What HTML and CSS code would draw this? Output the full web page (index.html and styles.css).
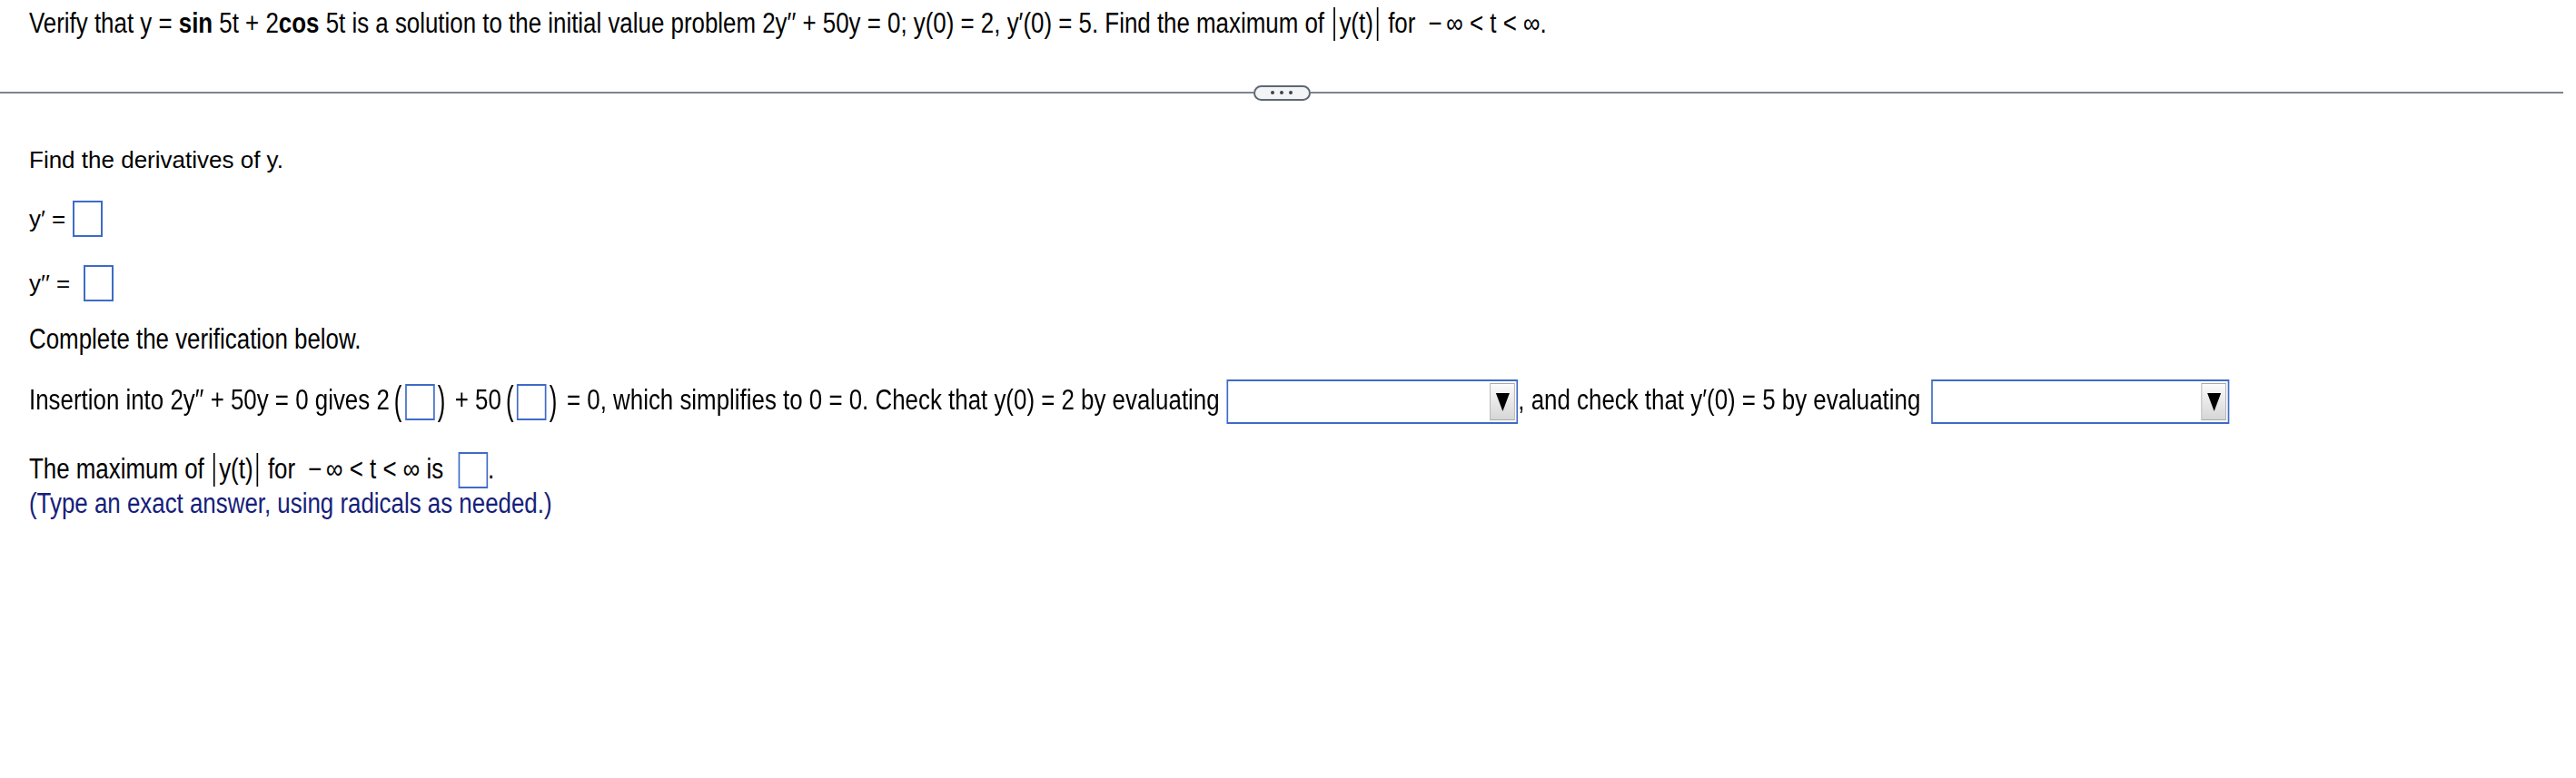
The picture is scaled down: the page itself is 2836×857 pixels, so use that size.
FILE: index.html
```html
<!DOCTYPE html>
<html>
<head>
<meta charset="utf-8">
<link rel="stylesheet" href="styles.css">
</head>
<body>
<div class="prompt cond">Verify that y = <b>sin</b> 5t + 2<b>cos</b> 5t is a solution to the initial value problem 2y′′ + 50y = 0; y(0) = 2, y′(0) = 5. Find the maximum of <span class="abs">y(t)</span> for <span class="neg">−</span>∞ &lt; t &lt; ∞.</div>
<div class="divider"><div class="rule"></div><div class="pill"><i></i><i></i><i></i></div><div class="rule"></div></div>
<div class="content">
<p class="row find arial">Find the derivatives of y.</p>
<p class="row d1 arial">y′ = <span class="box"></span></p>
<p class="row d2 arial">y′′ = <span class="box"></span></p>
<p class="row complete cond">Complete the verification below.</p>
<p class="row insert cond">Insertion into 2y′′ + 50y = 0 gives 2<span class="paren open">(</span><span class="box"></span><span class="paren">)</span> + 50<span class="paren open">(</span><span class="box"></span><span class="paren">)</span> = 0, which simplifies to 0 = 0. Check that y(0) = 2 by evaluating <span class="dropdown dd1"><span class="arrow"></span></span>, and check that y′(0) = 5 by evaluating <span class="dropdown dd2"><span class="arrow"></span></span></p>
<p class="row maxline cond">The maximum of <span class="abs">y(t)</span> for <span class="neg">−</span>∞ &lt; t &lt; ∞ is <span class="box"></span>.</p>
<p class="row hint cond">(Type an exact answer, using radicals as needed.)</p>
</div>
</body>
</html>
```
FILE: styles.css
```css
html, body {
  margin: 0;
  padding: 0;
  background: #ffffff;
  color: #000000;
}
body {
  font-family: "Liberation Sans", Arial, sans-serif;
}
/* condensed face: Arial-like glyphs narrowed horizontally */
.cond {
  font-family: "Liberation Sans", Arial, sans-serif;
  font-size: 31px;
  transform: scaleX(0.835);
  transform-origin: 0 0;
}
.arial {
  font-family: "Liberation Sans", Arial, sans-serif;
  font-size: 26px;
}
.prompt {
  margin-left: 32px;
  padding-top: 6px;
  height: 40px;
  line-height: 40px;
  white-space: nowrap;
}
.divider {
  display: flex;
  align-items: center;
  height: 20px;
  margin-top: 46px;
  margin-right: 14px;
}
.rule {
  flex: 1;
  height: 2px;
  background: #7b8491;
}
.pill {
  display: flex;
  align-items: center;
  justify-content: center;
  gap: 6px;
  width: 63px;
  height: 17px;
  box-sizing: border-box;
  border: 2px solid #5e6875;
  border-radius: 9px;
  background: #f3f4f6;
}
.pill i {
  width: 4px;
  height: 4px;
  border-radius: 50%;
  background: #3d444c;
}
.content {
  padding-top: 44px;
}
.row {
  margin: 0 0 0 32px;
  height: 40px;
  line-height: 40px;
  white-space: nowrap;
}
.d1 { margin-top: 25px; }
.d2 { margin-top: 31px; }
.d2 .box { margin-left: 8px; }
.complete { margin-top: 22px; }
.insert { margin-top: 22px; height: 50px; line-height: 50px; }
.maxline { margin-top: 31px; }
.maxline .box { margin-left: 11px; }
.hint { margin-top: -2px; color: #15207a; }
.box {
  display: inline-block;
  box-sizing: border-box;
  width: 33px;
  height: 40px;
  border: 2px solid #3f6bc6;
  vertical-align: -11px;
}
.cond .box {
  width: 39px;
  border-left-width: 2.4px;
  border-right-width: 2.4px;
}
.insert .box { vertical-align: -12px; }
.paren {
  display: inline-block;
  transform: scaleY(1.45);
  margin: 0 4px;
}
.paren.open { margin-left: 6px; }
.neg {
  margin: 0 6px 0 8px;
}
.abs {
  display: inline-block;
  line-height: 1;
  padding: 2px 5px 4px;
  margin: 0 4px;
  border-left: 2.4px solid #000;
  border-right: 2.4px solid #000;
}
.dropdown {
  display: inline-flex;
  justify-content: flex-end;
  align-items: center;
  box-sizing: border-box;
  height: 49px;
  padding-right: 2px;
  border: 2px solid #3f6bc6;
  border-left-width: 2.4px;
  border-right-width: 2.4px;
  background: #ffffff;
  vertical-align: middle;
}
.dd1 { width: 384px; margin-left: 1px; }
.dd2 { width: 393px; margin-left: 6px; }
.arrow {
  display: flex;
  align-items: center;
  justify-content: center;
  box-sizing: border-box;
  width: 33px;
  height: 41px;
  border: 1px solid #a9a9a9;
  background: linear-gradient(#fbfbfb, #d6d6d6);
}
.arrow::after {
  content: "";
  width: 0;
  height: 0;
  border-left: 9px solid transparent;
  border-right: 9px solid transparent;
  border-top: 20px solid #000;
}
```
